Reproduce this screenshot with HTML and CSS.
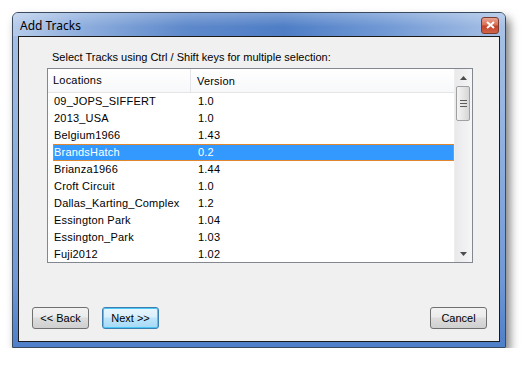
FILE: index.html
```html
<!DOCTYPE html>
<html lang="en">
<head>
  <meta charset="UTF-8">
  <title>Add Tracks</title>
  <link rel="stylesheet" href="styles.css">
</head>
<body>
  <div class="window">
    <div class="titlebar">
      <span class="title">Add Tracks</span>
      <span class="close">
        <svg width="9" height="8" viewBox="0 0 9 8"><path d="M1 1 L8 7 M8 1 L1 7" stroke="#fff" stroke-width="2"/></svg>
      </span>
    </div>
    <div class="client">
      <div class="hint">Select Tracks using Ctrl / Shift keys for multiple selection:</div>

      <div class="listbox">
        <div class="list">
          <div class="header">
            <div class="col-name">Locations</div>
            <div class="col-ver">Version</div>
          </div>
          <div class="row"><div class="col-name">09_JOPS_SIFFERT</div><div class="col-ver">1.0</div></div>
          <div class="row"><div class="col-name">2013_USA</div><div class="col-ver">1.0</div></div>
          <div class="row"><div class="col-name">Belgium1966</div><div class="col-ver">1.43</div></div>
          <div class="row selected"><div class="col-name">BrandsHatch</div><div class="col-ver">0.2</div></div>
          <div class="row"><div class="col-name">Brianza1966</div><div class="col-ver">1.44</div></div>
          <div class="row"><div class="col-name">Croft Circuit</div><div class="col-ver">1.0</div></div>
          <div class="row"><div class="col-name">Dallas_Karting_Complex</div><div class="col-ver">1.2</div></div>
          <div class="row"><div class="col-name">Essington Park</div><div class="col-ver">1.04</div></div>
          <div class="row"><div class="col-name">Essington_Park</div><div class="col-ver">1.03</div></div>
          <div class="row"><div class="col-name">Fuji2012</div><div class="col-ver">1.02</div></div>
        </div>
        <div class="scrollbar">
          <div class="arrow up">
            <svg width="7" height="4" viewBox="0 0 7 4"><path d="M0 4 L3.5 0 L7 4 Z" fill="#4d4d4d"/></svg>
          </div>
          <div class="thumb">
            <svg width="7" height="7" viewBox="0 0 7 7"><path d="M0 0.5 H7 M0 3.5 H7 M0 6.5 H7" stroke="#5c5c5c"/></svg>
          </div>
          <div class="track"></div>
          <div class="arrow down">
            <svg width="7" height="4" viewBox="0 0 7 4"><path d="M0 0 L7 0 L3.5 4 Z" fill="#4d4d4d"/></svg>
          </div>
        </div>
      </div>

      <div class="buttons">
        <button class="btn">&lt;&lt; Back</button>
        <button class="btn focused">Next &gt;&gt;</button>
        <span class="spacer"></span>
        <button class="btn">Cancel</button>
      </div>
    </div>
  </div>
</body>
</html>
```

FILE: styles.css
```css
body {
  margin: 0;
  background: #ffffff;
  font-family: "Liberation Sans", Arial, sans-serif;
  font-size: 11px;
  color: #000;
}
.window {
  margin: 12px 0 0 12px;
  width: 494px;
  height: 336px;
  box-sizing: border-box;
  border: 1px solid #3a4a60;
  border-radius: 6px 6px 0 0;
  padding: 0 5px 5px 5px;
  display: flex;
  flex-direction: column;
  background: linear-gradient(to bottom, #a9c2e6 0%, #8fb0df 40%, #6f98d6 80%, #4f7fc9 100%);
  box-shadow: 4px 6px 10px rgba(0,0,0,0.5);
}
.titlebar {
  height: 23px;
  display: flex;
  align-items: center;
  justify-content: space-between;
  margin: 0 -5px;
  padding: 0 6px 0 7px;
  border-radius: 5px 5px 0 0;
  background:
    linear-gradient(to bottom, rgba(255,255,255,0.25), rgba(255,255,255,0) 60%),
    linear-gradient(to right, #b6cbea 0%, #8eaedd 14%, #5e89cb 35%, #4f7ec6 55%, #6f98d4 75%, #a8c1e6 100%);
}
.title {
  font-family: "Noto Sans", "Open Sans", sans-serif;
  font-size: 12px;
  color: #000;
  padding-top: 1px;
}
.close {
  width: 16px;
  height: 15px;
  display: flex;
  align-items: center;
  justify-content: center;
  border: 1px solid #7a3b2e;
  border-radius: 3px;
  background: linear-gradient(to bottom, #e8a493 0%, #d86f56 45%, #c2412a 55%, #d0654a 100%);
  margin-top: 1px;
}
.client {
  flex: 1;
  border: 1px solid #1a1a1a;
  background: #f0f0f0;
  display: flex;
  flex-direction: column;
  padding: 0 12px 12px 13px;
}
.hint {
  margin: 12px 0 0 20px;
  line-height: 16px;
}
.listbox {
  margin: 3px 14px 0 15px;
  height: 193px;
  border: 1px solid #828790;
  background: #fff;
  display: flex;
  overflow: hidden;
}
.list {
  flex: 1;
  overflow: hidden;
  letter-spacing: 0.2px;
}
.header {
  height: 23px;
  display: flex;
  align-items: center;
  border-bottom: 1px solid #e5e5e5;
  background: linear-gradient(to bottom, #ffffff, #f7f8fa);
}
.header .col-name {
  border-right: 1px solid #e3e5e8;
  height: 23px;
  line-height: 23px;
}
.row {
  height: 17px;
  line-height: 17px;
  display: flex;
  margin-left: 5px;
  box-sizing: border-box;
}
.col-name {
  width: 138px;
  padding-left: 5px;
  flex-shrink: 0;
}
.header .col-name {
  width: 137px;
}
.row .col-name {
  width: 138px;
  padding-left: 1px;
}
.col-ver {
  padding-left: 6px;
}
.row.selected {
  background: #3399ff;
  color: #fff;
  outline: 1px solid #e0862e;
  outline-offset: -1px;
}
.scrollbar {
  width: 17px;
  flex-shrink: 0;
  display: flex;
  flex-direction: column;
  background: linear-gradient(to right, #e9e9eb, #f6f6f7);
  border-left: 1px solid #eeeeee;
}
.arrow {
  height: 17px;
  display: flex;
  align-items: center;
  justify-content: center;
}
.thumb {
  margin: 0 2px 0 1px;
  height: 35px;
  box-sizing: border-box;
  border: 1px solid #a0a0a0;
  border-radius: 2px;
  background: linear-gradient(to right, #f4f4f4, #e6e6e6 50%, #d6d6d6);
  display: flex;
  align-items: center;
  justify-content: center;
}
.track {
  flex: 1;
}
.buttons {
  margin-top: auto;
  display: flex;
  gap: 13px;
}
.spacer {
  flex: 1;
}
.btn {
  width: 57px;
  height: 22px;
  padding: 0;
  font-family: "Liberation Sans", Arial, sans-serif;
  font-size: 11px;
  color: #000;
  border: 1px solid #707070;
  border-radius: 3px;
  background: linear-gradient(to bottom, #f2f2f2 0%, #ebebeb 45%, #dddddd 50%, #cfcfcf 100%);
}
.btn.focused {
  border-color: #3c7fb1;
  box-shadow: inset 0 0 0 1px #48c6f5;
  background: linear-gradient(to bottom, #eaf6fd 0%, #d9f0fc 45%, #bee6fd 50%, #a7d9f5 100%);
}
```
